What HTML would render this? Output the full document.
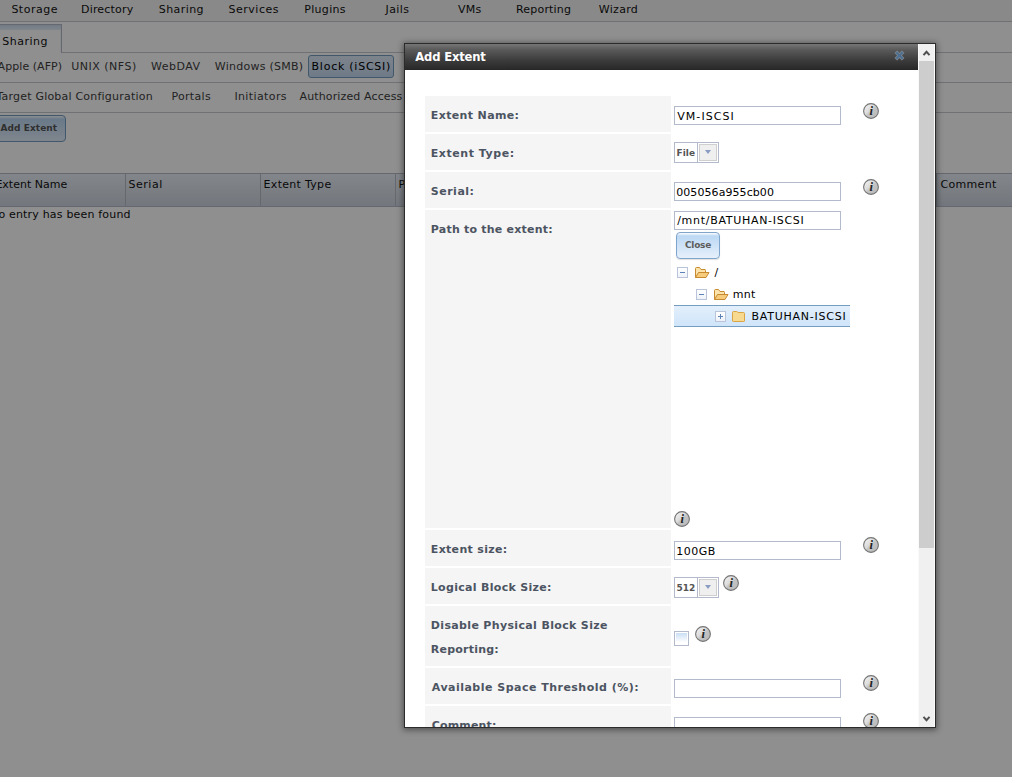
<!DOCTYPE html>
<html><head><meta charset="utf-8"><title>Add Extent</title>
<style>
html,body{margin:0;padding:0;}
body{width:1012px;height:777px;overflow:hidden;position:relative;background:#fff;font-family:"DejaVu Sans","Liberation Sans",sans-serif;font-size:11px;color:#000;}
.a{position:absolute;box-sizing:border-box;}
.t{position:absolute;white-space:nowrap;line-height:16px;height:16px;}
.hl{position:absolute;left:0;width:1012px;height:1px;background:#c6cad0;}
#bg,#ov{position:absolute;left:0;top:0;width:1012px;height:777px;overflow:hidden;}
#ov{background:rgba(0,0,0,0.44);}
#dlg{position:absolute;left:404px;top:43px;width:532px;height:685px;overflow:hidden;box-shadow:0 1px 6px 1px rgba(0,0,0,0.45);background:#fff;}
#din{position:absolute;left:-404px;top:-43px;width:1012px;height:777px;}
.lab{position:absolute;left:425px;width:246px;background:#f5f5f5;}
.inp{position:absolute;left:674px;width:167px;height:19px;box-sizing:border-box;border:1px solid #b3bacb;background:#fff;}
.sel{position:absolute;left:674px;width:45px;height:21px;box-sizing:border-box;border:1px solid #b3bacb;background:#fff;}
.sel i{position:absolute;left:22px;top:0;width:1px;height:19px;background:#b3bacb;}
.sel b{position:absolute;left:24px;top:1px;width:18px;height:17px;box-sizing:border-box;border:1px solid #cfcfcf;background:#efefef;}
.sel u{position:absolute;left:30px;top:7px;width:0;height:0;border-left:3.5px solid transparent;border-right:3.5px solid transparent;border-top:4px solid #8a9cc4;}
.ic{position:absolute;width:16px;height:16px;}
.ex{position:absolute;width:11px;height:11px;box-sizing:border-box;border:1px solid #b9c3d9;background:linear-gradient(#fff,#eef2f8);}
.ex s{position:absolute;left:2px;top:4px;width:5px;height:1px;background:#5d82b8;}
.ex em{position:absolute;left:4px;top:2px;width:1px;height:5px;background:#5d82b8;}
</style></head><body>
<div id="bg">
  <div class="a" style="left:0;top:0;width:1012px;height:21px;background:#f5f5f5;"></div>
  <div class="hl" style="top:21px;"></div>
  <div class="hl" style="top:52px;"></div>
  <div class="a" style="left:-5px;top:24px;width:67px;height:29px;background:#fff;border:1px solid #b5bcc7;border-bottom:none;"></div>
  <div class="a" style="left:-4px;top:25px;width:65px;height:5px;background:linear-gradient(#cbdcee,#e4edf6);"></div><div class="a" style="left:60px;top:30px;width:1px;height:22px;background:#f4f6f9;"></div>
  <div class="a" style="left:308px;top:55px;width:86px;height:23px;border:1px solid #759dc0;border-radius:3px;background:linear-gradient(#dfeaf8,#c6dbf3);"></div>
  <div class="hl" style="top:82px;"></div>
  <div class="hl" style="top:112px;"></div>
  <div class="a" style="left:-10px;top:115px;width:76px;height:27px;border:1px solid #759dc0;border-radius:4px;background:linear-gradient(#fff 0,#bcd8f4 3px,#e3eefa 100%);"></div>
  <div class="a" style="left:0;top:173px;width:1012px;height:34px;border-top:1px solid #b5bcc7;border-bottom:1px solid #b5bcc7;background:linear-gradient(#e9eff6,#cdd5df);"></div>
  <div class="a" style="left:125px;top:174px;width:1px;height:32px;background:#b5bcc7;"></div>
  <div class="a" style="left:260px;top:174px;width:1px;height:32px;background:#b5bcc7;"></div>
  <div class="a" style="left:395px;top:174px;width:1px;height:32px;background:#b5bcc7;"></div>
  <div class="a" style="left:936px;top:174px;width:1px;height:32px;background:#b5bcc7;"></div>
<div class="t" id="t0" style="left:11.39px;top:2.19px;font-size:11px;font-weight:normal;color:#111;letter-spacing:0.500px;">Storage</div>
<div class="t" id="t1" style="left:81.00px;top:2.19px;font-size:11px;font-weight:normal;color:#111;letter-spacing:0.188px;">Directory</div>
<div class="t" id="t2" style="left:158.80px;top:2.19px;font-size:11px;font-weight:normal;color:#111;letter-spacing:0.417px;">Sharing</div>
<div class="t" id="t3" style="left:228.59px;top:2.19px;font-size:11px;font-weight:normal;color:#111;letter-spacing:0.500px;">Services</div>
<div class="t" id="t4" style="left:304.19px;top:2.19px;font-size:11px;font-weight:normal;color:#111;letter-spacing:0.333px;">Plugins</div>
<div class="t" id="t5" style="left:385.59px;top:2.19px;font-size:11px;font-weight:normal;color:#111;letter-spacing:0.375px;">Jails</div>
<div class="t" id="t6" style="left:458.00px;top:2.19px;font-size:11px;font-weight:normal;color:#111;letter-spacing:0.250px;">VMs</div>
<div class="t" id="t7" style="left:516.00px;top:2.19px;font-size:11px;font-weight:normal;color:#111;letter-spacing:0.187px;">Reporting</div>
<div class="t" id="t8" style="left:598.80px;top:2.19px;font-size:11px;font-weight:normal;color:#111;letter-spacing:0.300px;">Wizard</div>
<div class="t" id="t9" style="left:2.19px;top:34.19px;font-size:11px;font-weight:normal;color:#111;letter-spacing:0.500px;">Sharing</div>
<div class="t" id="t10" style="left:-2.41px;top:59.19px;font-size:11px;font-weight:normal;color:#3d3d3d;letter-spacing:0.056px;">A<span class="m">pple (AFP)</span></div>
<div class="t" id="t11" style="left:71.19px;top:59.19px;font-size:11px;font-weight:normal;color:#3d3d3d;letter-spacing:0.500px;">UNIX (NFS)</div>
<div class="t" id="t12" style="left:151.00px;top:59.19px;font-size:11px;font-weight:normal;color:#3d3d3d;letter-spacing:0.500px;">WebDAV</div>
<div class="t" id="t13" style="left:214.80px;top:59.19px;font-size:11px;font-weight:normal;color:#3d3d3d;letter-spacing:0.250px;">Windows (SMB)</div>
<div class="t" id="t14" style="left:311.59px;top:59.19px;font-size:11px;font-weight:normal;color:#000;letter-spacing:0.750px;">Block (iSCSI)</div>
<div class="t" id="t15" style="left:-3.61px;top:89.19px;font-size:11px;font-weight:normal;color:#3d3d3d;letter-spacing:0.211px;">Target <span class="m">Global Configuration</span></div>
<div class="t" id="t16" style="left:171.39px;top:89.19px;font-size:11px;font-weight:normal;color:#3d3d3d;letter-spacing:0.333px;">Portals</div>
<div class="t" id="t17" style="left:234.39px;top:89.19px;font-size:11px;font-weight:normal;color:#3d3d3d;letter-spacing:0.389px;">Initiators</div>
<div class="t" id="t18" style="left:299.59px;top:89.19px;font-size:11px;font-weight:normal;color:#3d3d3d;letter-spacing:0.125px;">Authorized Access</div>
<div class="t" id="t19" style="left:0.59px;top:120.49px;font-size:9px;font-weight:bold;color:#555;letter-spacing:0.056px;">Add Extent</div>
<div class="t" id="t20" style="left:-4.61px;top:176.79px;font-size:11px;font-weight:normal;color:#111;letter-spacing:-0.000px;">E<span class="m">xtent Name</span></div>
<div class="t" id="t21" style="left:128.59px;top:176.79px;font-size:11px;font-weight:normal;color:#111;letter-spacing:0.500px;">Serial</div>
<div class="t" id="t22" style="left:263.59px;top:176.79px;font-size:11px;font-weight:normal;color:#111;letter-spacing:0.300px;">Extent Type</div>
<div class="t" id="t23" style="left:398.59px;top:176.79px;font-size:11px;font-weight:normal;color:#111;letter-spacing:0.333px;">Path to the extent</div>
<div class="t" id="t24" style="left:940.39px;top:176.79px;font-size:11px;font-weight:normal;color:#111;letter-spacing:0.333px;">Comment</div>
<div class="t" id="t25" style="left:-10.00px;top:206.99px;font-size:11px;font-weight:normal;color:#111;letter-spacing:0.184px;">No <span class="m">entry has been found</span></div>
</div>
<div id="ov"></div>
<div id="dlg"><div id="din">
  <div class="a" style="left:405px;top:44px;width:513px;height:26px;background:linear-gradient(#767676 0,#5a5a5a 22%,#3c3c3c 62%,#272727 100%);"></div>
  <!-- close x -->
  <svg class="a" style="left:893px;top:49px;" width="13" height="13" viewBox="0 0 13 13"><path d="M4.1 4.1 L8.9 8.9 M8.9 4.1 L4.1 8.9" stroke="#7a8692" stroke-width="3.6" stroke-linecap="square" fill="none"/><path d="M4.1 4.1 L8.9 8.9 M8.9 4.1 L4.1 8.9" stroke="#4a6d90" stroke-width="2.0" stroke-linecap="square" fill="none"/></svg>
  <!-- scrollbar -->
  <div class="a" style="left:918px;top:44px;width:17px;height:683px;background:#f0f0f0;border-left:1px solid #fafafa;border-right:1px solid #fafafa;"></div>
  <div class="a" style="left:919px;top:61px;width:15px;height:487px;background:#cdcdcd;"></div>
  <svg class="a" style="left:918px;top:44px" width="17" height="17" viewBox="0 0 17 17"><path d="M5.5 11.2 L8.5 7.8 L11.5 11.2" fill="none" stroke="#505050" stroke-width="2"/></svg>
  <svg class="a" style="left:918px;top:710px" width="17" height="17" viewBox="0 0 17 17"><path d="M5.5 6.8 L8.5 10.2 L11.5 6.8" fill="none" stroke="#505050" stroke-width="2"/></svg>

  <div class="lab" style="top:96px;height:36px;"></div>
  <div class="lab" style="top:134px;height:36px;"></div>
  <div class="lab" style="top:172px;height:36px;"></div>
  <div class="lab" style="top:210px;height:318px;"></div>
  <div class="lab" style="top:530px;height:36px;"></div>
  <div class="lab" style="top:568px;height:36px;"></div>
  <div class="lab" style="top:606px;height:60px;"></div>
  <div class="lab" style="top:668px;height:36px;"></div>
  <div class="lab" style="top:706px;height:36px;"></div>

  <div class="inp" style="top:106px;"></div>
  <div class="inp" style="top:182px;"></div>
  <div class="inp" style="top:211px;"></div>
  <div class="inp" style="top:541px;"></div>
  <div class="inp" style="top:679px;"></div>
  <div class="inp" style="top:717px;"></div>

  <div class="sel" style="top:142px;"><i></i><b></b><u></u></div>
  <div class="sel" style="top:577px;"><i></i><b></b><u></u></div>

  <!-- close button -->
  <div class="a" style="left:676px;top:232px;width:44px;height:27px;border:1px solid #7fa5cc;box-shadow:0 1px 1px rgba(0,0,0,0.12);border-radius:4px;background:linear-gradient(#fff 0,#bcd8f4 3px,#e6f0fb 100%);"></div>

  <!-- tree -->
  <div class="a" style="left:674px;top:305px;width:176px;height:22px;border-top:1px solid #759dc0;border-bottom:1px solid #759dc0;background:linear-gradient(#e3effb,#cfe5fa);"></div>
  <div class="ex" style="left:677px;top:267px;"><s></s></div>
  <div class="ex" style="left:696px;top:289px;"><s></s></div>
  <div class="ex" style="left:715px;top:311px;"><s></s><em></em></div>
  <!-- open folders -->
  <svg class="a" style="left:694px;top:266px" width="16" height="13" viewBox="0 0 16 13"><path d="M1.5 11.5 V2.5 Q1.5 1.5 2.5 1.5 H5.5 L7 3.5 H11 Q11.5 3.5 11.5 4.5 V6" fill="#fbe3ab" stroke="#c88a2e" stroke-width="1"/><path d="M1.5 11.5 L4.5 6.5 H15 L12 11.5 Z" fill="#f6cc7c" stroke="#c88a2e" stroke-width="1" stroke-linejoin="round"/></svg>
  <svg class="a" style="left:713px;top:288px" width="16" height="13" viewBox="0 0 16 13"><path d="M1.5 11.5 V2.5 Q1.5 1.5 2.5 1.5 H5.5 L7 3.5 H11 Q11.5 3.5 11.5 4.5 V6" fill="#fbe3ab" stroke="#c88a2e" stroke-width="1"/><path d="M1.5 11.5 L4.5 6.5 H15 L12 11.5 Z" fill="#f6cc7c" stroke="#c88a2e" stroke-width="1" stroke-linejoin="round"/></svg>
  <!-- closed folder -->
  <svg class="a" style="left:731px;top:310px" width="15" height="13" viewBox="0 0 15 13"><path d="M1.5 11 V2.5 Q1.5 1.5 2.5 1.5 H5.5 Q6.5 1.5 7 2.5 H12.5 Q13.5 2.5 13.5 3.5 V11 Q13.5 11.5 12.5 11.5 H2.5 Q1.5 11.5 1.5 11 Z" fill="#f8d990" stroke="#d9a441" stroke-width="1"/></svg>

  <!-- checkbox -->
  <div class="a" style="left:674px;top:631px;width:15px;height:15px;border:1px solid #b3bacb;background:#fff;"><div class="a" style="left:1px;top:1px;width:11px;height:11px;background:linear-gradient(#c9def5,#fff 85%);"></div></div>

<svg class="ic" style="left:863px;top:103px" width="16" height="16" viewBox="0 0 16 16"><defs><linearGradient id="g0" x1="0" y1="0" x2="1" y2="1"><stop offset="0.1" stop-color="#f0f0f0"/><stop offset="0.42" stop-color="#dcdcdc"/><stop offset="0.52" stop-color="#c4c4c4"/><stop offset="1" stop-color="#b6b6b6"/></linearGradient></defs><circle cx="8" cy="8" r="7.4" fill="url(#g0)" stroke="#747474" stroke-width="1.1"/><text x="8.2" y="12.2" text-anchor="middle" font-family="'Liberation Serif',serif" font-style="italic" font-weight="bold" font-size="12.5" fill="#222">i</text></svg>
<svg class="ic" style="left:863px;top:179px" width="16" height="16" viewBox="0 0 16 16"><defs><linearGradient id="g1" x1="0" y1="0" x2="1" y2="1"><stop offset="0.1" stop-color="#f0f0f0"/><stop offset="0.42" stop-color="#dcdcdc"/><stop offset="0.52" stop-color="#c4c4c4"/><stop offset="1" stop-color="#b6b6b6"/></linearGradient></defs><circle cx="8" cy="8" r="7.4" fill="url(#g1)" stroke="#747474" stroke-width="1.1"/><text x="8.2" y="12.2" text-anchor="middle" font-family="'Liberation Serif',serif" font-style="italic" font-weight="bold" font-size="12.5" fill="#222">i</text></svg>
<svg class="ic" style="left:674px;top:511px" width="16" height="16" viewBox="0 0 16 16"><defs><linearGradient id="g2" x1="0" y1="0" x2="1" y2="1"><stop offset="0.1" stop-color="#f0f0f0"/><stop offset="0.42" stop-color="#dcdcdc"/><stop offset="0.52" stop-color="#c4c4c4"/><stop offset="1" stop-color="#b6b6b6"/></linearGradient></defs><circle cx="8" cy="8" r="7.4" fill="url(#g2)" stroke="#747474" stroke-width="1.1"/><text x="8.2" y="12.2" text-anchor="middle" font-family="'Liberation Serif',serif" font-style="italic" font-weight="bold" font-size="12.5" fill="#222">i</text></svg>
<svg class="ic" style="left:863px;top:537px" width="16" height="16" viewBox="0 0 16 16"><defs><linearGradient id="g3" x1="0" y1="0" x2="1" y2="1"><stop offset="0.1" stop-color="#f0f0f0"/><stop offset="0.42" stop-color="#dcdcdc"/><stop offset="0.52" stop-color="#c4c4c4"/><stop offset="1" stop-color="#b6b6b6"/></linearGradient></defs><circle cx="8" cy="8" r="7.4" fill="url(#g3)" stroke="#747474" stroke-width="1.1"/><text x="8.2" y="12.2" text-anchor="middle" font-family="'Liberation Serif',serif" font-style="italic" font-weight="bold" font-size="12.5" fill="#222">i</text></svg>
<svg class="ic" style="left:723px;top:575px" width="16" height="16" viewBox="0 0 16 16"><defs><linearGradient id="g4" x1="0" y1="0" x2="1" y2="1"><stop offset="0.1" stop-color="#f0f0f0"/><stop offset="0.42" stop-color="#dcdcdc"/><stop offset="0.52" stop-color="#c4c4c4"/><stop offset="1" stop-color="#b6b6b6"/></linearGradient></defs><circle cx="8" cy="8" r="7.4" fill="url(#g4)" stroke="#747474" stroke-width="1.1"/><text x="8.2" y="12.2" text-anchor="middle" font-family="'Liberation Serif',serif" font-style="italic" font-weight="bold" font-size="12.5" fill="#222">i</text></svg>
<svg class="ic" style="left:695px;top:626px" width="16" height="16" viewBox="0 0 16 16"><defs><linearGradient id="g5" x1="0" y1="0" x2="1" y2="1"><stop offset="0.1" stop-color="#f0f0f0"/><stop offset="0.42" stop-color="#dcdcdc"/><stop offset="0.52" stop-color="#c4c4c4"/><stop offset="1" stop-color="#b6b6b6"/></linearGradient></defs><circle cx="8" cy="8" r="7.4" fill="url(#g5)" stroke="#747474" stroke-width="1.1"/><text x="8.2" y="12.2" text-anchor="middle" font-family="'Liberation Serif',serif" font-style="italic" font-weight="bold" font-size="12.5" fill="#222">i</text></svg>
<svg class="ic" style="left:863px;top:675px" width="16" height="16" viewBox="0 0 16 16"><defs><linearGradient id="g6" x1="0" y1="0" x2="1" y2="1"><stop offset="0.1" stop-color="#f0f0f0"/><stop offset="0.42" stop-color="#dcdcdc"/><stop offset="0.52" stop-color="#c4c4c4"/><stop offset="1" stop-color="#b6b6b6"/></linearGradient></defs><circle cx="8" cy="8" r="7.4" fill="url(#g6)" stroke="#747474" stroke-width="1.1"/><text x="8.2" y="12.2" text-anchor="middle" font-family="'Liberation Serif',serif" font-style="italic" font-weight="bold" font-size="12.5" fill="#222">i</text></svg>
<svg class="ic" style="left:863px;top:713px" width="16" height="16" viewBox="0 0 16 16"><defs><linearGradient id="g7" x1="0" y1="0" x2="1" y2="1"><stop offset="0.1" stop-color="#f0f0f0"/><stop offset="0.42" stop-color="#dcdcdc"/><stop offset="0.52" stop-color="#c4c4c4"/><stop offset="1" stop-color="#b6b6b6"/></linearGradient></defs><circle cx="8" cy="8" r="7.4" fill="url(#g7)" stroke="#747474" stroke-width="1.1"/><text x="8.2" y="12.2" text-anchor="middle" font-family="'Liberation Serif',serif" font-style="italic" font-weight="bold" font-size="12.5" fill="#222">i</text></svg>

<div class="t" id="t26" style="left:415.19px;top:49.29px;font-size:11.6px;font-weight:bold;color:#fff;letter-spacing:-0.167px;">Add Extent</div>
<div class="t" id="t27" style="left:430.80px;top:108.19px;font-size:11px;font-weight:bold;color:#4c5462;letter-spacing:0.364px;">Extent Name:</div>
<div class="t" id="t28" style="left:430.80px;top:146.19px;font-size:11px;font-weight:bold;color:#4c5462;letter-spacing:0.545px;">Extent Type:</div>
<div class="t" id="t29" style="left:430.80px;top:184.19px;font-size:11px;font-weight:bold;color:#4c5462;letter-spacing:0.500px;">Serial:</div>
<div class="t" id="t30" style="left:430.80px;top:222.19px;font-size:11px;font-weight:bold;color:#4c5462;letter-spacing:0.222px;">Path to the extent:</div>
<div class="t" id="t31" style="left:430.80px;top:542.19px;font-size:11px;font-weight:bold;color:#4c5462;letter-spacing:0.318px;">Extent size:</div>
<div class="t" id="t32" style="left:430.80px;top:580.19px;font-size:11px;font-weight:bold;color:#4c5462;letter-spacing:0.306px;">Logical Block Size:</div>
<div class="t" id="t33" style="left:430.80px;top:618.19px;font-size:11px;font-weight:bold;color:#4c5462;letter-spacing:0.346px;">Disable Physical Block Size</div>
<div class="t" id="t34" style="left:430.80px;top:642.19px;font-size:11px;font-weight:bold;color:#4c5462;letter-spacing:0.222px;">Reporting:</div>
<div class="t" id="t35" style="left:431.80px;top:680.19px;font-size:11px;font-weight:bold;color:#4c5462;letter-spacing:0.483px;">Available Space Threshold (%):</div>
<div class="t" id="t36" style="left:431.80px;top:718.19px;font-size:11px;font-weight:bold;color:#4c5462;letter-spacing:0.143px;">Comment:</div>
<div class="t" id="t37" style="left:677.19px;top:109.19px;font-size:11px;font-weight:normal;color:#000;letter-spacing:1.071px;">VM-ISCSI</div>
<div class="t" id="t38" style="left:676.19px;top:185.19px;font-size:11px;font-weight:normal;color:#000;letter-spacing:0.077px;">005056a955cb00</div>
<div class="t" id="t39" style="left:677.19px;top:213.49px;font-size:11px;font-weight:normal;color:#000;letter-spacing:0.706px;">/mnt/BATUHAN-ISCSI</div>
<div class="t" id="t40" style="left:676.19px;top:543.79px;font-size:11px;font-weight:normal;color:#000;letter-spacing:0.500px;">100GB</div>
<div class="t" id="t41" style="left:676.59px;top:144.89px;font-size:9px;font-weight:bold;color:#555;letter-spacing:-0.000px;">File</div>
<div class="t" id="t42" style="left:676.39px;top:579.79px;font-size:9px;font-weight:bold;color:#555;letter-spacing:0.000px;">512</div>
<div class="t" id="t43" style="left:685.00px;top:237.49px;font-size:9px;font-weight:bold;color:#5c5c5c;letter-spacing:-0.250px;">Close</div>
<div class="t" id="t44" style="left:714.39px;top:265.19px;font-size:11px;font-weight:normal;color:#000;letter-spacing:0.000px;">/</div>
<div class="t" id="t45" style="left:732.80px;top:286.99px;font-size:11px;font-weight:normal;color:#000;letter-spacing:0.250px;">mnt</div>
<div class="t" id="t46" style="left:751.59px;top:308.99px;font-size:11px;font-weight:normal;color:#000;letter-spacing:0.750px;">BATUHAN-ISCSI</div>
  <div class="a" style="left:404px;top:43px;width:532px;height:685px;border:1px solid #2b2b2b;"></div>

</div></div>
</body></html>
